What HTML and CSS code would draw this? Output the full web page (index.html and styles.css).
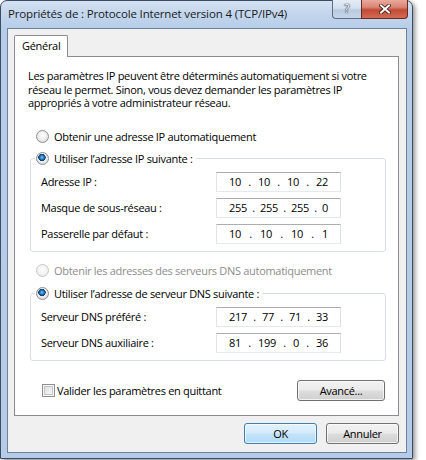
FILE: index.html
```html
<!DOCTYPE html>
<html lang="fr">
<head>
<meta charset="utf-8">
<title>Propriétés de : Protocole Internet version 4 (TCP/IPv4)</title>
<link rel="stylesheet" href="styles.css">
</head>
<body>
<div class="window">
  <div class="titlebar">
    <span class="title">Propriétés de : Protocole Internet version 4 (TCP/IPv4)</span>
    <div class="caption-btns">
      <span class="cap help">?</span>
      <span class="cap close">
        <svg width="12" height="10" viewBox="0 0 12 10" aria-hidden="true">
          <path d="M2 1.5 L10 8.5 M10 1.5 L2 8.5" stroke="#3a1a14" stroke-width="3.6" stroke-linecap="square" fill="none"/>
          <path d="M2 1.5 L10 8.5 M10 1.5 L2 8.5" stroke="#ffffff" stroke-width="2" stroke-linecap="square" fill="none"/>
        </svg>
      </span>
    </div>
  </div>
  <div class="client">
    <div class="tabs"><div class="tab">Général</div></div>
    <div class="panel">
      <p class="desc">Les paramètres IP peuvent être déterminés automatiquement si votre<br>réseau le permet. Sinon, vous devez demander les paramètres IP<br>appropriés à votre administrateur réseau.</p>
      <div class="opt row-opt"><span class="radio"></span>Obtenir une adresse IP automatiquement</div>
      <fieldset class="group">
        <legend><span class="opt"><span class="radio on"></span>Utiliser l’adresse IP suivante :</span></legend>
        <div class="fields">
          <span class="lbl">Adresse IP :</span>
          <div class="ip"><span>10</span><span>.</span><span>10</span><span>.</span><span>10</span><span>.</span><span>22</span></div>
          <span class="lbl">Masque de sous-réseau :</span>
          <div class="ip"><span>255</span><span>.</span><span>255</span><span>.</span><span>255</span><span>.</span><span>0</span></div>
          <span class="lbl">Passerelle par défaut :</span>
          <div class="ip"><span>10</span><span>.</span><span>10</span><span>.</span><span>10</span><span>.</span><span>1</span></div>
        </div>
      </fieldset>
      <div class="opt row-opt dns-auto disabled"><span class="radio off"></span>Obtenir les adresses des serveurs DNS automatiquement</div>
      <fieldset class="group dns">
        <legend><span class="opt"><span class="radio on"></span>Utiliser l’adresse de serveur DNS suivante :</span></legend>
        <div class="fields">
          <span class="lbl">Serveur DNS préféré :</span>
          <div class="ip"><span>217</span><span>.</span><span>77</span><span>.</span><span>71</span><span>.</span><span>33</span></div>
          <span class="lbl">Serveur DNS auxiliaire :</span>
          <div class="ip"><span>81</span><span>.</span><span>199</span><span>.</span><span>0</span><span>.</span><span>36</span></div>
        </div>
      </fieldset>
      <div class="footer-row">
        <div class="check"><span class="box"></span>Valider les paramètres en quittant</div>
        <button class="btn adv" type="button">Avancé...</button>
      </div>
    </div>
    <div class="actions">
      <button class="btn default" type="button">OK</button>
      <button class="btn" type="button">Annuler</button>
    </div>
  </div>
</div>
</body>
</html>
```
FILE: styles.css
```css
* { box-sizing: border-box; }
html, body { margin: 0; padding: 0; background: #ffffff; }
body {
  width: 426px;
  height: 460px;
  overflow: hidden;
  font-family: "Segoe UI", "Open Sans", "Noto Sans", sans-serif;
  font-size: 11px;
  letter-spacing: -0.3px;
  color: #000;
}
.window {
  width: 413px;
  height: 459px;
  border: 1px solid #3c4c60;
  border-radius: 7px 7px 0 0;
  background: linear-gradient(180deg, #d3e1f2 0, #c2d5ec 14px, #b6cce8 28px, #b4cbe9 100%);
  box-shadow: 2px 2px 5px rgba(0, 0, 0, 0.45);
  padding: 0 5px 5px 6px;
  display: flex;
  flex-direction: column;
}
.titlebar {
  height: 27px;
  display: flex;
  align-items: flex-start;
  flex: none;
}
.title {
  margin: 5px 0 0 1px;
  font-size: 11.5px;
  letter-spacing: -0.15px;
  color: #1b1b1b;
  white-space: nowrap;
}
.caption-btns {
  margin-left: auto;
  margin-right: -1px;
  display: flex;
  margin-top: -1px;
}
.cap {
  height: 19px;
  display: flex;
  align-items: center;
  justify-content: center;
  border: 1px solid #5d6e84;
  border-top: none;
}
.help {
  width: 29px;
  border-radius: 0 0 0 4px;
  border-right: none;
  background: linear-gradient(180deg, #e4ecf6 0, #d3e0ef 45%, #b9cbe1 55%, #c6d6ea 100%);
  color: #f4f7fb;
  font-family: "DejaVu Sans", sans-serif;
  font-size: 12px;
  letter-spacing: 0;
  text-shadow: 0 0 1px #2f3e52, 0 0 1px #2f3e52, 0 0 1px #2f3e52;
}
.close {
  width: 47px;
  border-radius: 0 0 4px 0;
  border-color: #6b2a20;
  background: linear-gradient(180deg, #e9a99b 0, #d98574 40%, #c24a36 55%, #d36b55 100%);
}
.client {
  flex: 1;
  border: 1px solid #6f8197;
  background: #f0f0f0;
  padding: 6px 7px 8px 6px;
  display: flex;
  flex-direction: column;
}
.tabs { display: flex; }
.tab {
  height: 22px;
  margin-bottom: -1px;
  position: relative;
  z-index: 1;
  border: 1px solid #898c95;
  border-bottom: none;
  border-radius: 2px 2px 0 0;
  background: #fff;
  padding: 0 7px 0 7px;
  line-height: 19px;
}
.panel {
  border: 1px solid #898c95;
  background: #fff;
  padding: 12px 12px 14px 13px;
}
.desc {
  margin: 0;
  line-height: 13.5px;
  white-space: nowrap;
}
.opt {
  display: flex;
  align-items: center;
  height: 14px;
  white-space: nowrap;
}
.row-opt {
  margin-top: 20px;
  padding-left: 8px;
}
.dns-auto { margin-top: 12px; }
.disabled { color: #8d8d8d; }
.radio {
  flex: none;
  width: 13px;
  height: 13px;
  margin-right: 5px;
  border: 1px solid #8e8f8f;
  border-radius: 50%;
  background: radial-gradient(circle at 50% 40%, #fefefe 0, #ececec 50%, #d2d2d2 100%);
}
.radio.on {
  background:
    radial-gradient(circle at 45% 40%, #8fd0f5 0, #2b86c8 1.6px, #145596 2.8px, #0c3a70 3.5px, rgba(12, 58, 112, 0) 3.9px),
    radial-gradient(circle at 50% 40%, #fefefe 0, #ececec 50%, #d2d2d2 100%);
}
.radio.off {
  border-color: #c6c6c6;
  background: radial-gradient(circle at 50% 40%, #fdfdfd 0, #f1f1f1 60%, #e6e6e6 100%);
}
.group {
  margin: 8px 0 0 2px;
  padding: 0;
  min-width: 0;
  border: 1px solid #d5dfe5;
  border-radius: 3px;
}
.dns { margin-top: 9px; }
.group legend {
  margin-left: 4px;
  padding: 0 3px 0 1px;
  background: #fff;
}
.fields {
  display: grid;
  grid-template-columns: 175px 125px;
  row-gap: 6px;
  align-items: center;
  padding: 6px 0 7px 10px;
}
.ip {
  height: 20px;
  display: flex;
  justify-content: space-between;
  align-items: center;
  padding: 0 12px 0 12px;
  background: #fff;
  border: 1px solid;
  border-color: #abadb3 #dbdfe6 #e3e9ef #e2e3ea;
}
.footer-row {
  margin-top: 19px;
  display: flex;
  justify-content: space-between;
  align-items: center;
}
.check {
  display: flex;
  align-items: center;
  padding-left: 14px;
}
.box {
  width: 13px;
  height: 13px;
  margin-right: 2px;
  border: 1px solid #8e8f8f;
  background: linear-gradient(135deg, #d9d9d9 0, #f2f2f2 70%, #fbfbfb 100%);
  box-shadow: inset 0 0 0 1px #f6f6f6, inset 0 0 0 2px #c3c6cb;
}
.btn {
  font: inherit;
  letter-spacing: inherit;
  color: #000;
  height: 21px;
  padding: 0;
  border: 1px solid #707070;
  border-radius: 3px;
  background: linear-gradient(180deg, #f2f2f2 0, #ebebeb 48%, #dddddd 52%, #cfcfcf 100%);
  box-shadow: inset 0 0 0 1px rgba(255, 255, 255, 0.7);
}
.adv { width: 88px; margin-right: 1px; }
.actions {
  margin-top: 7px;
  display: flex;
  justify-content: flex-end;
  gap: 9px;
}
.actions .btn { width: 73px; }
.btn.default {
  border-color: #3c7fb1;
  background: linear-gradient(180deg, #e3f2fc 0, #d4ebfb 48%, #c2e2f9 52%, #b5dbf6 100%);
  box-shadow: inset 0 0 0 1px rgba(255, 255, 255, 0.6);
}
```
